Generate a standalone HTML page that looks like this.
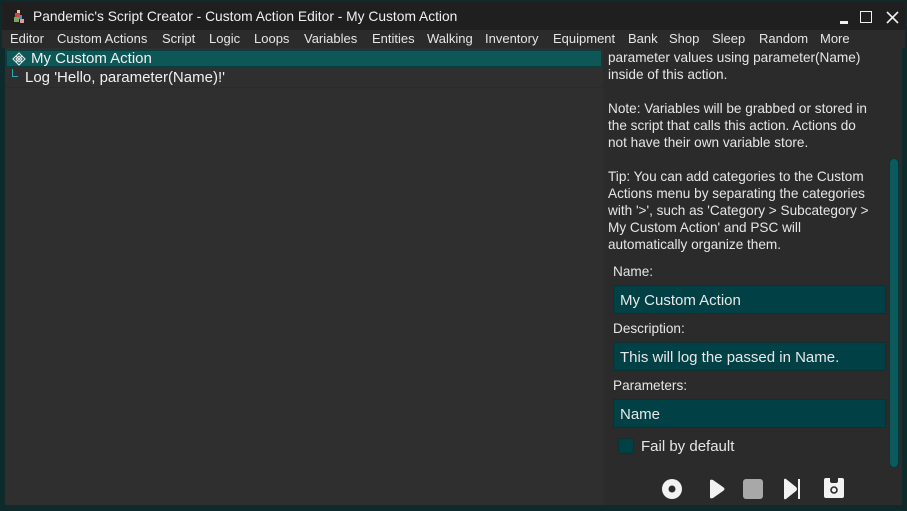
<!DOCTYPE html>
<html><head><meta charset="utf-8"><style>
*{margin:0;padding:0;box-sizing:border-box}
body{width:907px;height:511px;background:#0f2a2a;font-family:"Liberation Sans","DejaVu Sans",sans-serif;color:#e6e6e6;position:relative;overflow:hidden}
.abs{position:absolute}
#title{left:2px;top:2px;width:903px;height:28px;background:#1f1f1f}
#title .t{position:absolute;left:31px;top:7px;font-size:13.8px;color:#f0f0f0}
#menu{left:2px;top:30px;width:903px;height:18px;background:#2b2b2b;font-size:13px;white-space:nowrap}
#menu span{position:absolute;top:1px}
#left{left:5px;top:48px;width:598px;height:457px;background:#2f2f2f}
#right{left:603px;top:48px;width:299px;height:420px;background:#2b2b2b}
#tool{left:603px;top:468px;width:299px;height:37px;background:#2b2b2b}
.txt{font-size:13.6px;line-height:17px;color:#e6e6e6;white-space:nowrap}
.inp{position:absolute;left:613px;width:273px;height:29px;background:#014045;border:1px solid #0f2f30;font-size:15px;padding:6px 0 0 6px;color:#e8e8e8}
.lbl{position:absolute;left:613px;font-size:13.6px}
</style></head><body>
<div id="title" class="abs">
 <svg class="abs" style="left:10px;top:7px" width="14" height="16"><rect x="5" y="1" width="3" height="3" fill="#e8c79a"/><rect x="3" y="4" width="5" height="4" fill="#c44"/><rect x="7" y="6" width="3" height="4" fill="#4a8ad0"/><rect x="2" y="8" width="5" height="5" fill="#7a5"/><rect x="8" y="10" width="4" height="4" fill="#d9a"/></svg>
 <div class="t">Pandemic's Script Creator - Custom Action Editor - My Custom Action</div>
 <div class="abs" style="left:838px;top:19px;width:8px;height:3px;background:#f0f0f0"></div>
 <div class="abs" style="left:858px;top:9px;width:12px;height:12px;border:1.5px solid #f0f0f0"></div>
 <svg class="abs" style="left:884px;top:9px" width="13" height="13"><path d="M1 1L12 12M12 1L1 12" stroke="#f0f0f0" stroke-width="1.6"/></svg>
</div>
<div id="menu" class="abs">
<span style="left:8px">Editor</span><span style="left:55px">Custom Actions</span><span style="left:160px">Script</span><span style="left:207px">Logic</span><span style="left:252px">Loops</span><span style="left:302px">Variables</span><span style="left:370px">Entities</span><span style="left:425px">Walking</span><span style="left:483px">Inventory</span><span style="left:551px">Equipment</span><span style="left:626px">Bank</span><span style="left:667px">Shop</span><span style="left:710px">Sleep</span><span style="left:757px">Random</span><span style="left:818px">More</span>
</div>
<div id="left" class="abs">
 <div class="abs" style="left:1px;top:2px;width:596px;height:17px;background:#0e5757;border:1px solid #0a3e3e"></div>
 <svg class="abs" style="left:7px;top:4px" width="14" height="14"><path d="M7 1L13 7L7 13L1 7Z M7 4L10 7L7 10L4 7Z M4 4L10 10 M10 4L4 10" fill="none" stroke="#e8e8e8" stroke-width="1.1"/></svg>
 <div class="abs" style="left:26px;top:2px;font-size:15px;color:#f0f0f0">My Custom Action</div>
 <div class="abs" style="left:7px;top:21px;width:6px;height:8px;border-left:1px solid #2aa8b8;border-bottom:1px solid #2aa8b8"></div>
 <div class="abs" style="left:20px;top:21px;font-size:15px;color:#f0f0f0">Log 'Hello, parameter(Name)!'</div>
 <div class="abs" style="left:0;top:39px;width:598px;height:1px;background:#2b2b2b"></div>
</div>
<div id="right" class="abs">
 <div class="abs txt" style="left:5px;top:1px">parameter values using parameter(Name)<br>inside of this action.<br><br>Note: Variables will be grabbed or stored in<br>the script that calls this action. Actions do<br>not have their own variable store.<br><br>Tip: You can add categories to the Custom<br>Actions menu by separating the categories<br>with '&gt;', such as 'Category &gt; Subcategory &gt;<br>My Custom Action' and PSC will<br>automatically organize them.</div>
 <div class="abs" style="left:286px;top:110px;width:10px;height:310px;background:#0b5a5c;border:1px solid #0a3535;border-radius:5px"></div>
</div>
<div class="lbl" style="top:264px">Name:</div>
<div class="inp" style="top:285px">My Custom Action</div>
<div class="lbl" style="top:321px">Description:</div>
<div class="inp" style="top:342px">This will log the passed in Name.</div>
<div class="lbl" style="top:378px">Parameters:</div>
<div class="inp" style="top:399px">Name</div>
<div class="abs" style="left:618px;top:438px;width:16px;height:16px;background:#014045;border:1px solid #0f2f30;border-radius:3px"></div>
<div class="abs" style="left:641px;top:438px;font-size:15px">Fail by default</div>
<div id="tool" class="abs">
 <svg class="abs" style="left:58px;top:10px" width="22" height="22"><circle cx="11" cy="11" r="10" fill="#f2f2f2"/><circle cx="11" cy="11" r="3.5" fill="#2b2b2b"/></svg>
 <svg class="abs" style="left:104px;top:11px" width="20" height="20"><path d="M3 2Q3 0 6 1L16 8Q19 10 16 12L6 19Q3 20 3 18Z" fill="#f2f2f2"/></svg>
 <div class="abs" style="left:140px;top:11px;width:20px;height:20px;background:#a8a8a8;border-radius:3px"></div>
 <svg class="abs" style="left:180px;top:10px" width="18" height="22"><path d="M1 2Q1 0 3 1L13 9Q15 11 13 13L3 21Q1 22 1 20Z" fill="#f2f2f2"/><rect x="15" y="1" width="2" height="20" fill="#f2f2f2"/></svg>
 <svg class="abs" style="left:220px;top:9px" width="22" height="22"><path d="M3 1H7V4Q7 6 9 6H13Q15 6 15 4V1H19Q21 1 21 3V19Q21 21 19 21H3Q1 21 1 19V3Q1 1 3 1Z" fill="#f2f2f2"/><circle cx="11" cy="13" r="3" fill="none" stroke="#2b2b2b" stroke-width="1.6"/></svg>
</div>
</body></html>
